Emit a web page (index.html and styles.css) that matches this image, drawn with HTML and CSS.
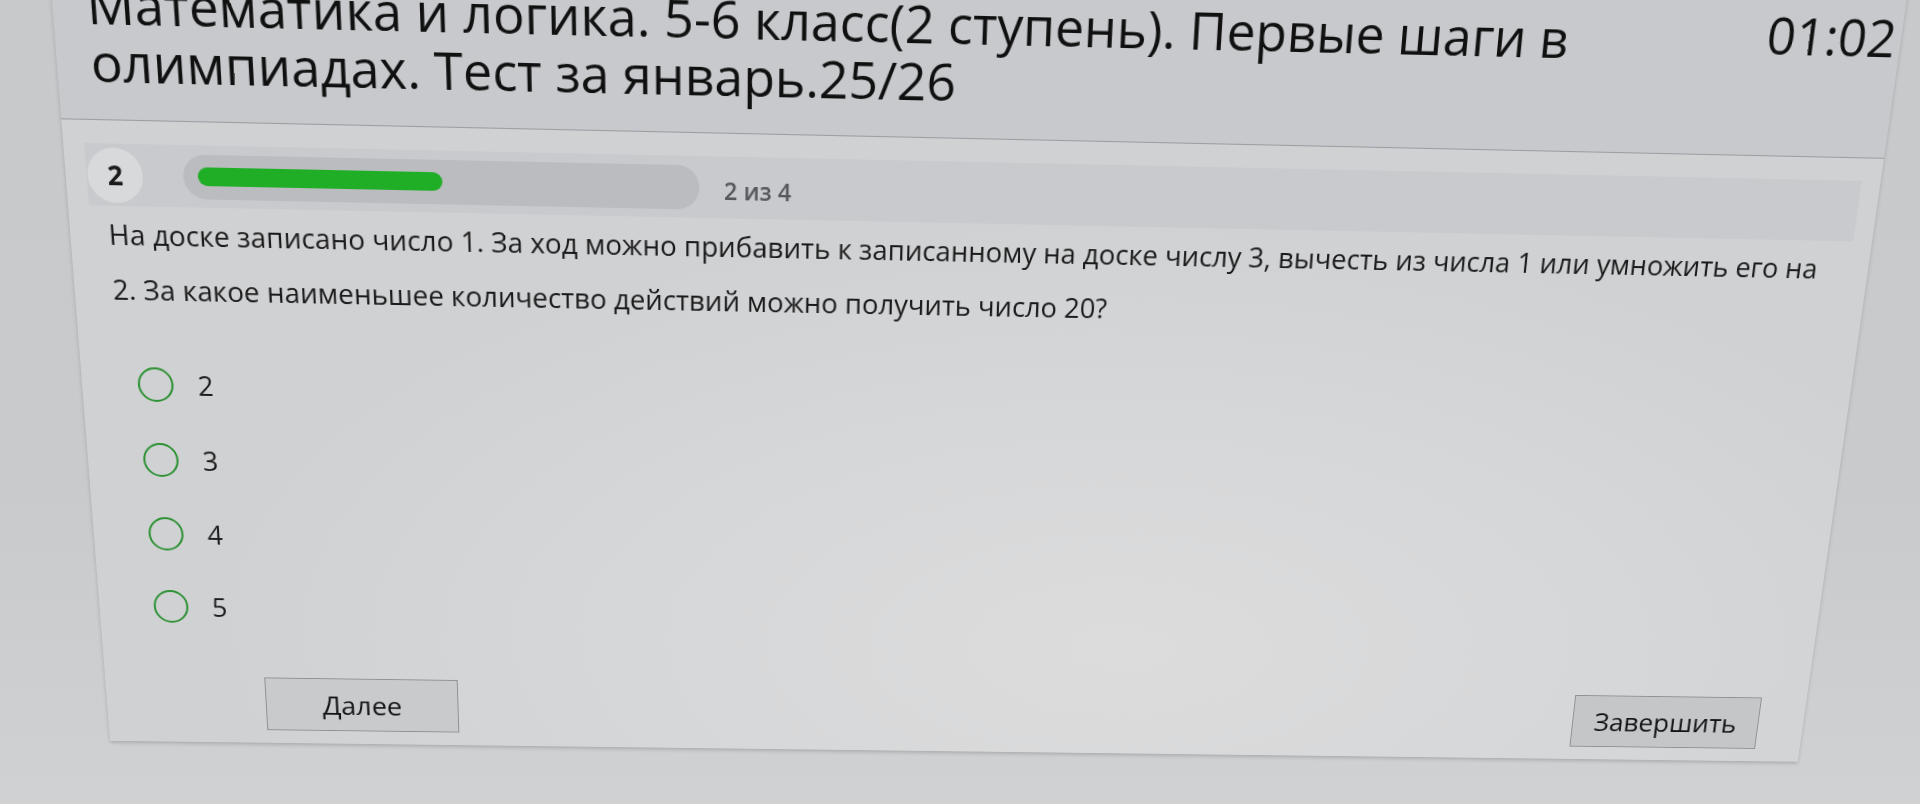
FILE: index.html
```
<!DOCTYPE html>
<html lang="ru">
<head>
<meta charset="utf-8">
<title>Тест</title>
<link rel="stylesheet" href="styles.css">
</head>
<body>
<div class="screen">
  <div class="page">
    <header class="head">
      <h1 class="title">Математика и логика. 5-6 класс(2 ступень). Первые шаги в<br>олимпиадах. Тест за январь.25/26</h1>
      <div class="timer">01:02</div>
    </header>
    <main class="body">
      <div class="progress">
        <div class="qnum">2</div>
        <div class="track"><div class="fill" style="width:50%"></div></div>
        <div class="count">2 из 4</div>
      </div>
      <p class="question">На доске записано число 1. За ход можно прибавить к записанному на доске числу 3, вычесть из числа 1 или умножить его на<br>2. За какое наименьшее количество действий можно получить число 20?</p>
      <ul class="options">
        <li class="option"><span class="radio"></span><span class="label">2</span></li>
        <li class="option"><span class="radio"></span><span class="label">3</span></li>
        <li class="option"><span class="radio"></span><span class="label">4</span></li>
        <li class="option"><span class="radio"></span><span class="label">5</span></li>
      </ul>
      <div class="actions">
        <button class="btn btn-next" type="button">Далее</button>
        <button class="btn btn-finish" type="button">Завершить</button>
      </div>
    </main>
  </div>
</div>
</body>
</html>
```
FILE: styles.css
```
html, body {
  margin: 0;
  padding: 0;
  width: 1920px;
  height: 804px;
  overflow: hidden;
  background: linear-gradient(to bottom, #c8c9cb 0%, #c9cacc 60%, #d0d1d2 100%);
  font-family: "Open Sans", "Noto Sans", sans-serif;
  color: #161616;
}

.screen {
  width: 1920px;
  height: 804px;
  transform-origin: 880px 402px;
  transform: rotate(1.22deg) perspective(1200px) rotateX(-8.5deg) rotateY(1.05deg);
}

.page {
  margin-left: 87px;
  margin-top: -60px;
  width: 1783px;
  display: flex;
  flex-direction: column;
  background: #d3d4d6;
  box-shadow: 0 2px 4px rgba(0, 0, 0, 0.18);
}

.head {
  display: flex;
  justify-content: space-between;
  align-items: flex-start;
  padding: 64px 5px 27px 32px;
  background: #c7c9cd;
  border-bottom: 1px solid #9a9da2;
}

.title {
  margin: 0;
  font-size: 50px;
  line-height: 54px;
  font-weight: 500;
  color: #101010;
  white-space: nowrap;
}

.timer {
  margin-top: -6px;
  font-size: 50px;
  line-height: 50px;
  font-weight: 400;
  color: #111;
}

.body {
  display: flex;
  flex-direction: column;
  padding: 0 19px 14px 20px;
  background: radial-gradient(ellipse 950px 450px at 1050px 520px, #dcdcdd 0%, #d6d7d8 55%, #d0d1d3 100%);
}

.progress {
  margin-top: 22px;
  height: 60px;
  display: flex;
  align-items: center;
  background: #c8cacd;
}

.qnum {
  width: 53px;
  height: 53px;
  margin-left: 1px;
  border-radius: 50%;
  background: #d8d9db;
  display: flex;
  align-items: center;
  justify-content: center;
  font-size: 26px;
  font-weight: 700;
  color: #1a1a1a;
}

.track {
  margin-left: 39px;
  width: 500px;
  height: 43px;
  box-sizing: border-box;
  padding: 0 14px;
  border-radius: 22px;
  background: #babcbf;
  display: flex;
  align-items: center;
}

.fill {
  height: 18px;
  border-radius: 9px;
  background: #1fae26;
}

.count {
  margin-left: 24px;
  margin-top: 7px;
  font-size: 23px;
  line-height: 23px;
  font-weight: 600;
  color: #55575b;
}

.question {
  margin: 1px 0 0 0;
  padding: 0 6px 0 17px;
  font-size: 27.3px;
  line-height: 54px;
  color: #1a1a1a;
  white-space: nowrap;
}

.options {
  list-style: none;
  margin: 29px 0 0 0;
  padding: 0 0 0 35px;
}

.option {
  height: 77px;
  display: flex;
  align-items: center;
}

.radio {
  width: 35px;
  height: 35px;
  box-sizing: border-box;
  border: 2.5px solid #2c9132;
  border-radius: 50%;
}

.label {
  margin-left: 24px;
  font-size: 27px;
  color: #1c1c1c;
}

.actions {
  margin-top: 37px;
  display: flex;
  justify-content: space-between;
  padding: 0 29px 0 143px;
}

.btn {
  height: 58px;
  border: 1px solid #8e9094;
  background: #c9cacc;
  font-family: "Open Sans", "Noto Sans", sans-serif;
  font-size: 28px;
  color: #141414;
  padding: 0;
}

.btn-next {
  width: 199px;
}

.btn-finish {
  width: 200px;
  background: #c4c6c8;
}
```
